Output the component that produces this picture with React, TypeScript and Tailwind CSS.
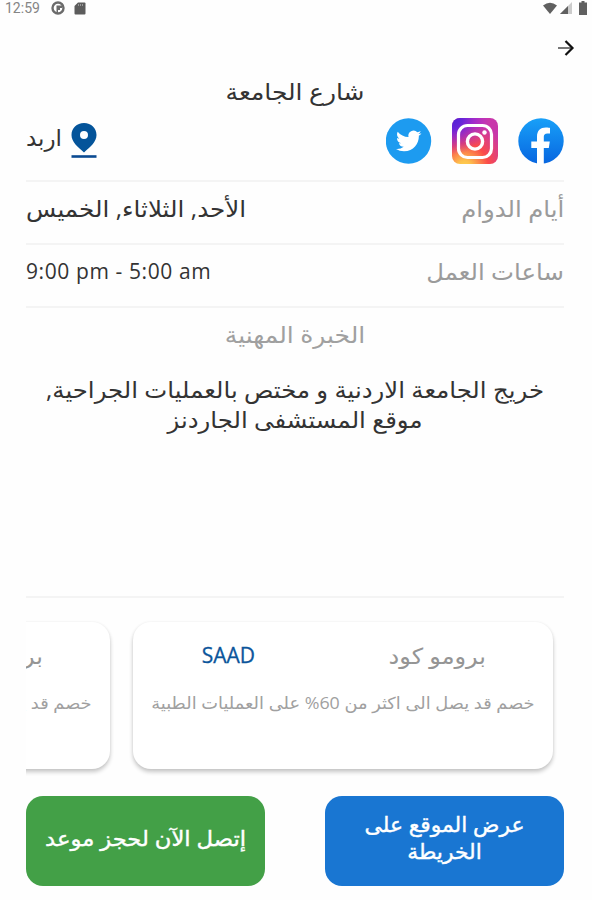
import type { ReactNode } from "react";

const FONT = "font-['Open_Sans','DejaVu_Sans',sans-serif]";

function StatusBar() {
  return (
    <div
      dir="ltr"
      className="h-4 flex items-center justify-between pl-[5px] pr-[5px] text-[#666]"
    >
      <div className="flex items-center">
        <span className="w-[36px] font-[Roboto,sans-serif] text-[14px] leading-4 whitespace-nowrap text-[#858585]">
          12:59
        </span>
        <svg className="ml-[10px]" width="14" height="14" viewBox="0 0 14 14">
          <circle cx="7" cy="7" r="5.500" fill="#fff" stroke="#6b6b6b" strokeWidth="2.400" />
          <path d="M5.500 4.500H11V7H9v2H7v3H5.500z" fill="#6b6b6b" />
        </svg>
        <svg className="ml-[9px]" width="12" height="13" viewBox="0 0 12 13">
          <path d="M4 .5h6.500a1 1 0 0 1 1 1v10a1 1 0 0 1-1 1h-9a1 1 0 0 1-1-1V4z" fill="#5c5c5c" />
          <path d="M4.500 2v2M6.500 2v2M8.500 2v2" stroke="#999" />
        </svg>
      </div>
      <div className="flex items-center">
        <svg width="14" height="12" viewBox="0 0 14 12">
          <path d="M0 3.500Q7-2 14 3.500L7 12z" fill="#606060" />
        </svg>
        <svg className="ml-[3px]" width="12" height="12" viewBox="0 0 12 12">
          <path d="M0 12 12 0v12z" fill="#ccc" />
          <path d="M0 12 8 4v8z" fill="#606060" />
        </svg>
        <svg className="ml-[7px]" width="8" height="14" viewBox="0 0 8 14">
          <path d="M2.500 0h3v1.500H8V14H0V1.500h2.500z" fill="#606060" />
        </svg>
      </div>
    </div>
  );
}

function Twitter() {
  return (
    <svg width="46" height="46" viewBox="0 0 46 46">
      <circle cx="22.500" cy="23" r="22.700" fill="#1d9bf0" />
      <g transform="translate(10 10.300) scale(1.060)">
        <path
          fill="#fff"
          d="M23.953 4.570a10 10 0 0 1-2.825.775 4.958 4.958 0 0 0 2.163-2.723c-.951.555-2.005.959-3.127 1.184a4.920 4.920 0 0 0-8.384 4.482C7.690 8.095 4.067 6.130 1.640 3.162a4.822 4.822 0 0 0-.666 2.475c0 1.710.870 3.213 2.188 4.096a4.904 4.904 0 0 1-2.228-.616v.060a4.923 4.923 0 0 0 3.946 4.827 4.996 4.996 0 0 1-2.212.085 4.936 4.936 0 0 0 4.604 3.417 9.867 9.867 0 0 1-6.102 2.105c-.390 0-.779-.023-1.170-.067a13.995 13.995 0 0 0 7.557 2.209c9.053 0 13.998-7.496 13.998-13.985 0-.210 0-.420-.015-.630A9.935 9.935 0 0 0 24 4.590z"
        />
      </g>
    </svg>
  );
}

function Instagram() {
  return (
    <svg width="46" height="46" viewBox="0 0 46 46">
      <defs>
        <radialGradient id="igWarm" cx=".27" cy="1.080" r="1.050">
          <stop offset="0" stopColor="#ffd54f" />
          <stop offset=".15" stopColor="#fdc04c" />
          <stop offset=".5" stopColor="#fb4b49" />
          <stop offset=".95" stopColor="#c837ab" />
        </radialGradient>
        <radialGradient id="igCool" cx="0" cy="0" r=".8">
          <stop offset="0" stopColor="#4a22d4" />
          <stop offset=".3" stopColor="#6a24d8" />
          <stop offset="1" stopColor="#a020f0" stopOpacity="0" />
        </radialGradient>
      </defs>
      <rect width="46" height="46" rx="8" fill="url(#igWarm)" />
      <rect width="46" height="46" rx="8" fill="url(#igCool)" />
      <rect x="6.500" y="7.500" width="33" height="32" rx="9" fill="none" stroke="#fff" strokeWidth="3.200" />
      <circle cx="23" cy="23.500" r="7.600" fill="none" stroke="#fff" strokeWidth="3.400" />
      <circle cx="32.500" cy="14.500" r="2.200" fill="#fff" />
    </svg>
  );
}

function Facebook() {
  return (
    <svg width="46" height="46" viewBox="0 0 46 46">
      <defs>
        <linearGradient id="fb" x1="0" y1="0" x2="0" y2="1">
          <stop offset="0" stopColor="#18a0f8" />
          <stop offset="1" stopColor="#0866e0" />
        </linearGradient>
      </defs>
      <circle cx="23" cy="23" r="22.700" fill="url(#fb)" />
      <path
        fill="#fff"
        d="M19 46V30h-5.700v-6.500H19v-4.800c0-6.200 3.500-9.200 8.800-9.200 2 0 4.200.4 4.200.4v5.500h-2.600c-2.600 0-3.600 1.500-3.600 3.400v4.700h6L30.800 30h-5v16z"
      />
    </svg>
  );
}

function Pin() {
  return (
    <svg width="26" height="36" viewBox="0 0 26 36">
      <path
        fill="#04549a"
        fillRule="evenodd"
        d="M13 0C5.700 0 .5 5.400.5 12c0 7 6 11.500 12.500 17.500C19.500 23.500 25.500 19 25.500 12 25.500 5.400 20.300 0 13 0zm0 8a4 4 0 1 1 0 8 4 4 0 0 1 0-8z"
      />
      <path d="M.5 33.500h25" stroke="#0b4a91" strokeWidth="2.600" />
    </svg>
  );
}

function Row(props: { label: string; children: ReactNode }) {
  return (
    <div className="h-[63px] flex items-center justify-between border-t-2 border-[#f4f4f4] pb-[9px]">
      <span className="origin-right scale-x-[1.06] text-[23px] leading-7 text-[#9b9b9b]">{props.label}</span>
      {props.children}
    </div>
  );
}

function PromoCard() {
  return (
    <div className="w-[420px] h-[147px] shrink-0 rounded-[18px] bg-white shadow-[0_3px_4px_rgba(0,0,0,0.22),0_0_3px_rgba(0,0,0,0.05)] pt-[19px]">
      <div className="flex items-center justify-between pr-[67px] pl-[68px]">
        <span className="w-[98px] origin-right scale-x-[1.09] text-[22px] leading-7 whitespace-nowrap text-[#959595]">
          برومو كود
        </span>
        <span className="w-[54px] text-[21px] leading-7 text-[#0b559b] [-webkit-text-stroke:0.3px]">SAAD</span>
      </div>
      <p className="mt-[22px] origin-right scale-x-[1.080] pr-[17px] text-[16.500px] leading-6 whitespace-nowrap text-[#a0a0a0]">
        خصم قد يصل الى اكثر من 60% على العمليات الطبية
      </p>
    </div>
  );
}

export default function App() {
  const promos = [0, 1];

  return (
    <div dir="rtl" className={`w-[592px] h-[900px] overflow-hidden bg-[#fefefe] text-[#333] ${FONT}`}>
      <StatusBar />
      <div className="h-[62px] pr-[17px] pt-[23px]">
        <svg width="18" height="18" viewBox="0 0 18 18" fill="none">
          <path d="M1 9h14" stroke="#777" strokeWidth="2" />
          <path d="M8.500 2 15.500 9l-7 7" stroke="#111" strokeWidth="2.200" />
        </svg>
      </div>

      <div className="pl-[26px] pr-[28px]">
        <h1 className="-mt-px mb-px scale-x-[1.085] text-center text-[23px] leading-7">شارع الجامعة</h1>
        <div className="h-[74px] flex items-start justify-between pt-[12px]">
          <div className="flex gap-[20px]">
            <Facebook />
            <Instagram />
            <Twitter />
          </div>
          <div className="flex gap-[9px] pt-[5px]">
            <Pin />
            <span className="text-[23px] leading-7">اربد</span>
          </div>
        </div>

        <Row label="أيام الدوام">
          <span className="origin-left scale-x-[1.07] text-[23px] leading-7">الأحد, الثلاثاء, الخميس</span>
        </Row>
        <Row label="ساعات العمل">
          <span dir="ltr" className="text-[21px] leading-7 tracking-[0.600px]">
            9:00 pm - 5:00 am
          </span>
        </Row>

        <div className="h-[290px] border-t-2 border-[#f4f4f4] pt-[12px] text-center">
          <h2 className="scale-x-[1.085] text-[23px] leading-7 text-[#a0a0a0]">الخبرة المهنية</h2>
          <p className="mt-[26px] scale-x-[1.06] text-[23px] leading-[30px]">
            <span className="block whitespace-nowrap">خريج الجامعة الاردنية و مختص بالعمليات الجراحية,</span>
            <span className="block">موقع المستشفى الجاردنز</span>
          </p>
        </div>

        <div className="h-[200px] flex gap-[23px] overflow-hidden border-t-2 border-[#f4f4f4] pt-[24px] pr-[11px]">
          {promos.map((i) => (
            <PromoCard key={i} />
          ))}
        </div>

        <div className="flex justify-between text-[21px] leading-[27px] text-white text-center [-webkit-text-stroke:0.4px]">
          <button className="w-[239px] h-[90px] rounded-[17px] bg-[#1976d2] pb-[6px]">
            <span className="block scale-x-[1.04]">عرض الموقع على</span>
            <span className="block scale-x-[1.04]">الخريطة</span>
          </button>
          <button className="w-[239px] h-[90px] rounded-[17px] bg-[#43a047] pb-[6px] whitespace-nowrap">
            <span className="block scale-x-[1.08]">إتصل الآن لحجز موعد</span>
          </button>
        </div>
      </div>
    </div>
  );
}
